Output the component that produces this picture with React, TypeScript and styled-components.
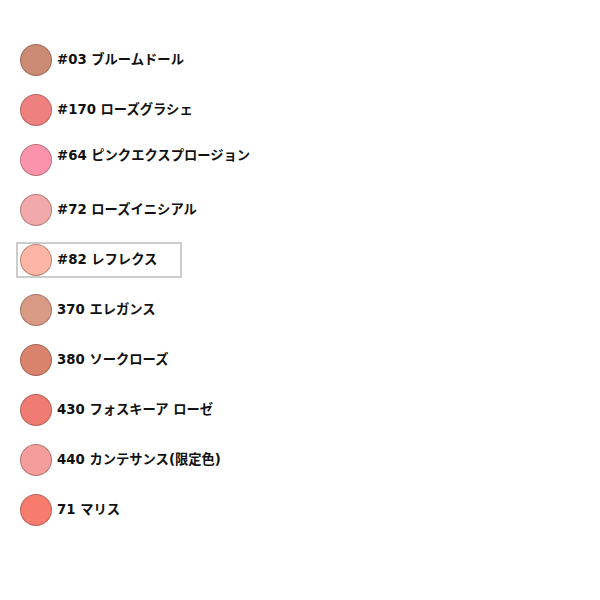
import React, { useState } from 'react'
import styled, { createGlobalStyle } from 'styled-components'

const GlobalStyle = createGlobalStyle`
  html, body {
    margin: 0;
    padding: 0;
    background: #fff;
  }
  body {
    font-family: 'DejaVu Sans', 'Noto Sans CJK JP', sans-serif;
  }
`

const List = styled.ul`
  list-style: none;
  margin: 0;
  padding: 35px 0 0 16px;
`

const Row = styled.li`
  height: 50px;
  display: flex;
  align-items: center;
`

const Swatch = styled.button<{ $selected: boolean }>`
  display: inline-flex;
  align-items: center;
  gap: 5px;
  height: 36px;
  box-sizing: border-box;
  padding: 0 23px 0 2px;
  border: 2px solid ${(p) => (p.$selected ? '#cccccc' : 'transparent')};
  background: #fff;
  cursor: pointer;
  font: inherit;
`

const Chip = styled.span<{ $color: string }>`
  width: 32px;
  height: 32px;
  border-radius: 50%;
  box-sizing: border-box;
  background: ${(p) => p.$color};
  border: 1px solid rgba(110, 70, 60, 0.45);
  flex-shrink: 0;
`

const Label = styled.span<{ $raise?: boolean }>`
  font-size: 13.3px;
  font-weight: bold;
  color: #111;
  white-space: nowrap;
  margin-bottom: ${(p) => (p.$raise ? '12px' : '3px')};
`

const shades = [
  { name: '#03 ブルームドール', color: '#cb8a74' },
  { name: '#170 ローズグラシェ', color: '#ef8080' },
  { name: '#64 ピンクエクスプロージョン', color: '#fc93ad', raise: true },
  { name: '#72 ローズイニシアル', color: '#f2a9ab' },
  { name: '#82 レフレクス', color: '#fdb5a5' },
  { name: '370 エレガンス', color: '#d99a85' },
  { name: '380 ソークローズ', color: '#d9826c' },
  { name: '430 フォスキーア ローゼ', color: '#ef7b72' },
  { name: '440 カンテサンス(限定色)', color: '#f59c9c' },
  { name: '71 マリス', color: '#f87c6e' },
]

const App = () => {
  const [selected, setSelected] = useState(4)

  return (
    <>
      <GlobalStyle />
      <List>
        {shades.map((s, i) => (
          <Row key={s.name}>
            <Swatch $selected={i === selected} onClick={() => setSelected(i)}>
              <Chip $color={s.color} />
              <Label $raise={s.raise}>{s.name}</Label>
            </Swatch>
          </Row>
        ))}
      </List>
    </>
  )
}

export default App
